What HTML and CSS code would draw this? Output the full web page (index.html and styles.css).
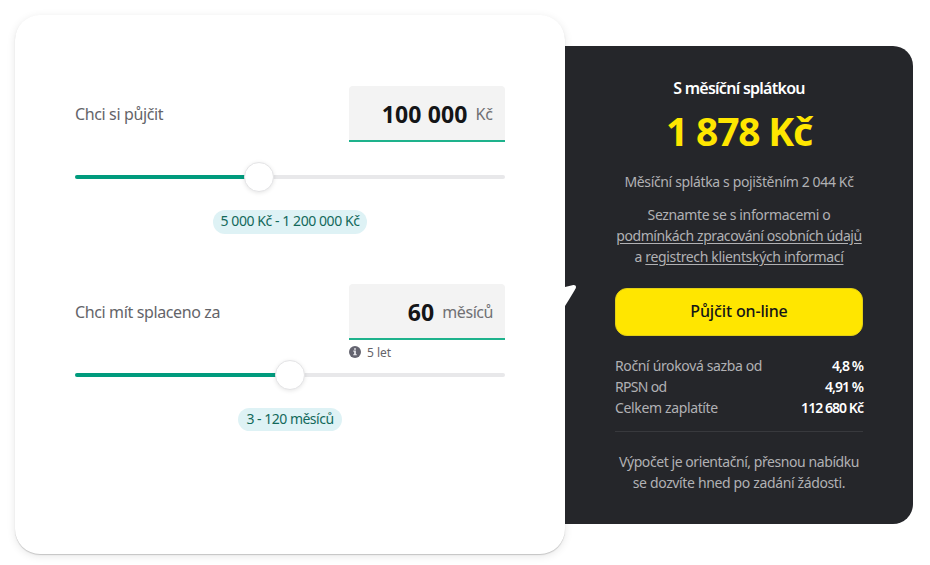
FILE: index.html
```
<!DOCTYPE html>
<html lang="cs">
<head>
    <meta charset="UTF-8">
    <meta name="viewport" content="width=device-width, initial-scale=1.0">
    <title>Půjčka</title>
    <link rel="stylesheet" href="styles.css">
</head>
<body>
    <div class="calculator">
        <div class="card">
            <div class="field">
                <div class="field-row">
                    <span class="label">Chci si půjčit</span>
                    <div class="input">
                        <span class="value">100 000</span>
                        <span class="unit unit-czk">Kč</span>
                    </div>
                </div>
                <div class="hint"></div>
                <div class="slider">
                    <div class="slider-fill" style="width: 184px;"></div>
                    <div class="thumb"></div>
                </div>
                <div class="range">5 000 Kč - 1 200 000 Kč</div>
            </div>

            <div class="field">
                <div class="field-row">
                    <span class="label">Chci mít splaceno za</span>
                    <div class="input">
                        <span class="value">60</span>
                        <span class="unit">měsíců</span>
                    </div>
                </div>
                <div class="hint">
                    <svg class="info-icon" width="12" height="12" viewBox="0 0 12 12">
                        <circle cx="6" cy="6" r="6" fill="#646470"/>
                        <path d="M5.1 2.2h1.8v1.6H5.1zM4.3 4.6h2.6v3.6h.9v1.1H4.2V8.2h.9V5.7h-.8z" fill="#e6e6ea"/>
                    </svg>
                    <span>5 let</span>
                </div>
                <div class="slider">
                    <div class="slider-fill" style="width: 215px;"></div>
                    <div class="thumb"></div>
                </div>
                <div class="range range-term">3 - 120 měsíců</div>
            </div>
        </div>

        <div class="summary">
            <svg class="pointer" width="12" height="22" viewBox="0 0 12 22">
                <path d="M0 2L8.3 .1C10.4-.1 11.6 1.4 10.7 3.2Q9 6.500 0 21z" fill="#fff"/>
            </svg>
            <div class="title">S měsíční splátkou</div>
            <div class="price">1 878 Kč</div>
            <div class="insurance">Měsíční splátka s pojištěním 2 044 Kč</div>
            <div class="terms">
                <div>Seznamte se s informacemi o</div>
                <a href="#">podmínkách zpracování osobních údajů</a>
                <div class="terms-registry">a <a href="#">registrech klientských informací</a></div>
            </div>
            <button class="button">Půjčit on-line</button>
            <div class="rates">
                <div class="rate"><span>Roční úroková sazba od</span><b>4,8 %</b></div>
                <div class="rate"><span class="rate-rpsn">RPSN od</span><b>4,91 %</b></div>
                <div class="rate"><span>Celkem zaplatíte</span><b>112 680 Kč</b></div>
            </div>
            <div class="note">
                <div class="note-first">Výpočet je orientační, přesnou nabídku</div>
                <div>se dozvíte hned po zadání žádosti.</div>
            </div>
        </div>
    </div>
</body>
</html>
```
FILE: styles.css
```
* {
    box-sizing: border-box;
}

body {
    margin: 0;
    background: #fff;
    font-family: 'Noto Sans', 'Open Sans', sans-serif;
    overflow: hidden;
}

.calculator {
    display: flex;
    align-items: flex-start;
    padding: 15px;
    white-space: nowrap;
}

.card {
    width: 550px;
    height: 539px;
    padding: 71px 60px 0;
    background: #fff;
    border-radius: 25px;
    box-shadow: 0 1px 1px rgba(0, 0, 0, 0.18), 0 2px 8px rgba(0, 0, 0, 0.1);
}

.field {
    display: flex;
    flex-direction: column;
    height: 198px;
}

.field-row {
    display: flex;
    justify-content: space-between;
    align-items: center;
}

.label {
    font-size: 16px;
    letter-spacing: -0.37px;
    color: #646469;
}

.input {
    display: flex;
    align-items: center;
    justify-content: flex-end;
    width: 156px;
    height: 56px;
    padding: 2px 12px 0;
    background: #f3f3f3;
    border-bottom: 2px solid #1eb28c;
    border-radius: 4px 4px 0 0;
}

.value {
    font-size: 23px;
    font-weight: 700;
    letter-spacing: 0.1px;
    color: #141517;
    margin-right: 8px;
}

.unit {
    font-size: 16px;
    letter-spacing: -0.45px;
    color: #707073;
}

.unit-czk {
    letter-spacing: 0;
}

.hint {
    display: flex;
    align-items: center;
    gap: 6px;
    height: 24px;
    margin-left: 274px;
    font-size: 12px;
    color: #646469;
}

.slider {
    display: flex;
    align-items: center;
    height: 4px;
    margin: 9px 0 31px;
    background: #e8e8ea;
    border-radius: 2px;
}

.slider-fill {
    flex: none;
    height: 4px;
    background: #009b7d;
    border-radius: 2px 0 0 2px;
}

.thumb {
    flex: none;
    width: 30px;
    height: 30px;
    margin-left: -15px;
    background: #fff;
    border: 1px solid #e4e4e6;
    border-radius: 50%;
    box-shadow: 0 1px 4px rgba(0, 0, 0, 0.1);
}

.range {
    align-self: center;
    height: 24px;
    padding: 0 8px;
    border-radius: 12px;
    background: #def2f5;
    color: #13695b;
    font-size: 14px;
    letter-spacing: -0.43px;
    line-height: 22px;
}

.range-term {
    height: 23px;
    letter-spacing: -0.5px;
}

.summary {
    position: relative;
    width: 348px;
    height: 478px;
    margin-top: 31px;
    padding: 30px 50px 0;
    background: #25262a;
    border-radius: 0 20px 20px 0;
    color: #b1b1b4;
    font-size: 14px;
    letter-spacing: -0.36px;
    line-height: 21px;
    text-align: center;
}

/* speech bubble tail, overlaps the dark panel */
.pointer {
    position: absolute;
    left: 0;
    top: 239px;
}

.title {
    height: 24px;
    color: #fff;
    font-size: 16px;
    font-weight: 600;
    letter-spacing: -0.73px;
    line-height: 24px;
}

.price {
    height: 64px;
    color: #ffe600;
    font-size: 39px;
    font-weight: 700;
    letter-spacing: -1.2px;
    line-height: 62px;
}

.insurance {
    margin-top: 7px;
}

.terms {
    margin-top: 12px;
}

.terms a {
    color: inherit;
    letter-spacing: -0.42px;
    text-underline-offset: 2px;
}

.terms .terms-registry a {
    letter-spacing: -0.34px;
}

.button {
    display: block;
    width: 248px;
    height: 48px;
    margin: 21px 0 19px;
    padding: 0 0 2px;
    background: #ffe600;
    border: 1px solid #e2cf15;
    border-radius: 12px;
    color: #141517;
    font-family: inherit;
    font-size: 16px;
    font-weight: 500;
    letter-spacing: -0.15px;
}

.rates {
    padding-bottom: 13px;
    border-bottom: 1px solid #38393d;
}

.rate {
    display: flex;
    justify-content: space-between;
}

.rate-rpsn {
    letter-spacing: -0.7px;
}

.rate b {
    color: #fff;
    font-weight: 600;
    letter-spacing: -0.95px;
}

.note {
    margin-top: 19px;
}

.note-first {
    letter-spacing: -0.43px;
}
```
